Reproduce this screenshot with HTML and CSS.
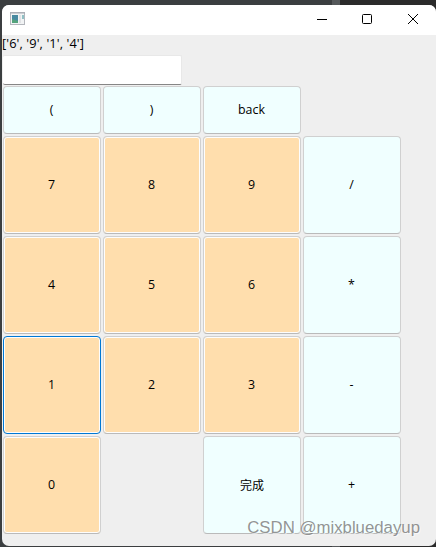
FILE: index.html
```html
<!DOCTYPE html>
<html lang="zh">
<head>
    <meta charset="UTF-8">
    <title>calc</title>
    <link rel="stylesheet" href="styles.css">
</head>
<body>
<div class="window">
    <!-- 标题栏 -->
    <div class="titlebar">
        <svg class="logo" width="16" height="14" viewBox="0 0 16 14">
            <rect x="0.5" y="0.5" width="14" height="12" fill="#f1f3f4" stroke="#b3b6bc"/>
            <path d="M0 1h15" stroke="#a5a9b0"/>
            <rect x="2" y="3" width="6" height="8" fill="#4789a0"/>
            <path d="M2 11V7l6 2v2z" fill="#55a37c"/>
            <rect x="9" y="3" width="2" height="8" fill="#e0e1e4"/>
            <rect x="12" y="3" width="2" height="4" fill="#8fc0c4"/>
        </svg>
        <div class="controls">
            <svg width="10" height="10" viewBox="0 0 10 10"><path d="M0 5.5h10" stroke="#000"/></svg>
            <svg width="10" height="10" viewBox="0 0 10 10"><rect x="0.5" y="0.5" width="9" height="9" rx="1" fill="none" stroke="#000"/></svg>
            <svg width="10" height="10" viewBox="0 0 10 10"><path d="M0 0l10 10M10 0L0 10" stroke="#000"/></svg>
        </div>
    </div>
    <p class="result">['6', '9', '1', '4']</p>
    <input type="text" class="entry">
    <!-- 按键 -->
    <div class="keys">
        <button class="op">(</button>
        <button class="op">)</button>
        <button class="op">back</button>
        <span></span>
        <button class="num">7</button>
        <button class="num">8</button>
        <button class="num">9</button>
        <button class="op">/</button>
        <button class="num">4</button>
        <button class="num">5</button>
        <button class="num">6</button>
        <button class="op">*</button>
        <button class="num active">1</button>
        <button class="num">2</button>
        <button class="num">3</button>
        <button class="op">-</button>
        <button class="num">0</button>
        <span></span>
        <button class="op done">完成</button>
        <button class="op">+</button>
    </div>
    <div class="mark">CSDN @mixbluedayup</div>
</div>
</body>
</html>
```
FILE: styles.css
```css
*{
    margin: 0;
    padding: 0;
    box-sizing: border-box;
}
body{
    height: 547px;
    padding: 5px 0 1px 2px;
    background: linear-gradient(90deg, #3b3e40 0, #3b3e40 332px, #55585a 332px, #55585a 340px, #2b2b2b 340px);
    font-family: "Open Sans", "Noto Sans CJK SC", sans-serif;
    font-size: 12px;
    overflow: hidden;
}
.window{
    position: relative;
    width: 434px;
    height: 541px;
    background: #efefef;
    border-radius: 7px;
    overflow: hidden;
}
.titlebar{
    display: flex;
    justify-content: space-between;
    height: 30px;
    padding: 7px 18px 0 8px;
    background: #fff;
}
.controls{
    display: flex;
    gap: 36px;
    padding-top: 2px;
}
.controls svg{
    display: block;
}
.controls svg:first-child{
    margin-right: -1px;
}
.result{
    height: 20px;
    line-height: 16px;
    font-size: 12.8px;
    letter-spacing: .1px;
}
.entry{
    display: block;
    width: 179px;
    height: 30px;
    margin-left: 1px;
    border: 1px solid #e8e8e8;
    border-left: none;
    border-bottom: 1px solid #868686;
    border-radius: 2px;
    background: #fff;
    outline: none;
}
.keys{
    display: grid;
    grid-template-columns: repeat(4, 98px);
    grid-template-rows: 48px repeat(4, 98px);
    gap: 2px;
    padding: 1px 0 0 1px;
}
.keys button{
    padding: 0 1px 2px 0;
    border: 1px solid #d0d0d0;
    border-bottom-color: #bababa;
    border-radius: 4px;
    font: inherit;
    font-size: 12.4px;
    color: #000;
}
.keys .op{
    background: #f0ffff;
}
.keys .num{
    background: #ffdead;
    box-shadow: inset 0 0 0 1px #fdfdfd;
}
.keys .active{
    border-color: #0078d4;
}
.keys .done{
    padding: 0;
    font-size: 12px;
}
/* 水印 */
.mark{
    position: absolute;
    right: 16px;
    bottom: 8px;
    font: 16.8px/20px "Liberation Sans", sans-serif;
    color: rgba(120, 120, 120, .8);
    text-shadow: 1px 1px 0 rgba(255, 255, 255, .6);
    white-space: nowrap;
}
```
